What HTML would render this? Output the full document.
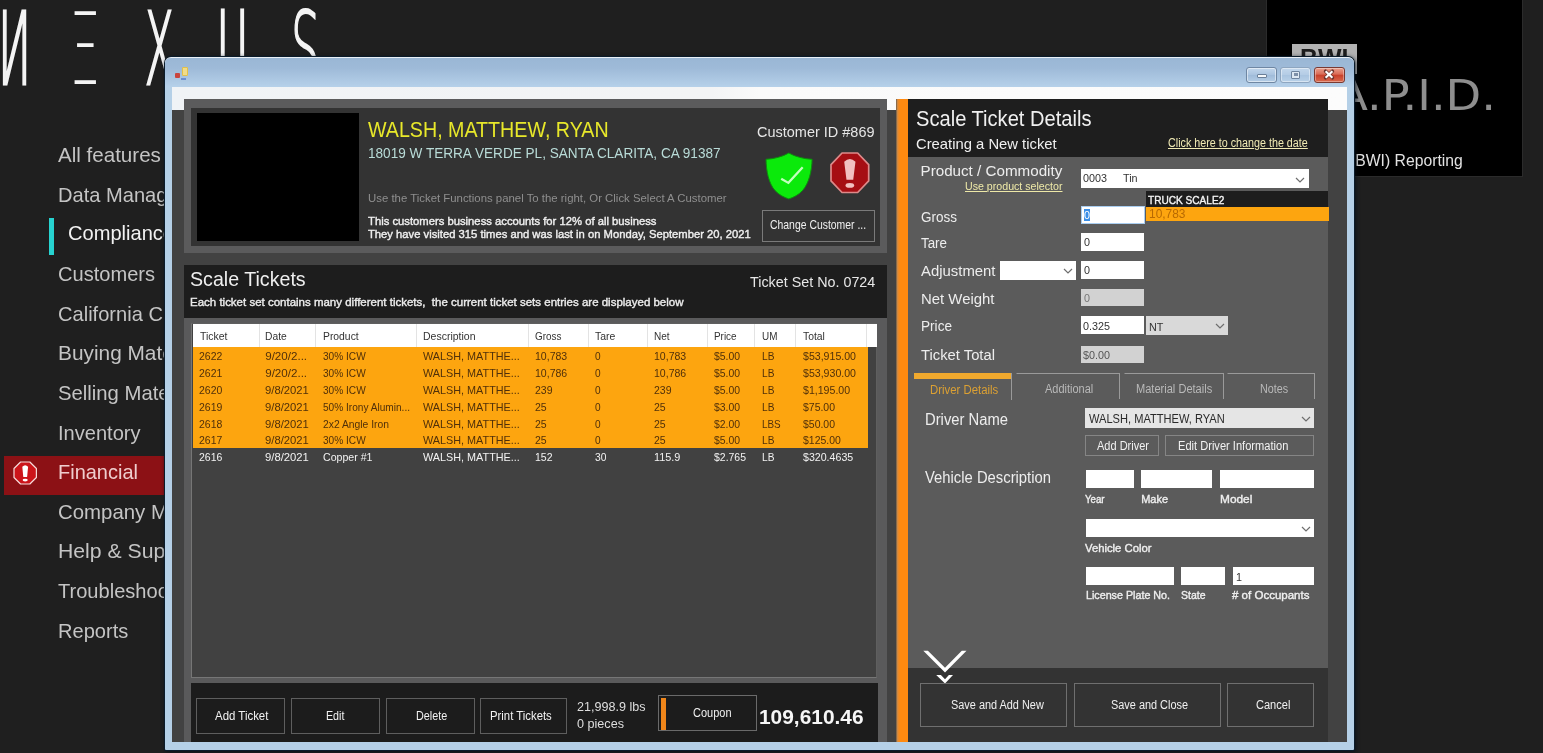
<!DOCTYPE html>
<html lang="en"><head><meta charset="utf-8"><title>Scale Ticket Details</title>
<style>
html,body{margin:0;padding:0;}
html{background:#1f1f1f;}
body{width:1543px;height:753px;overflow:hidden;position:relative;background:#1f1f1f;font-family:"Liberation Sans",sans-serif;}
#root{position:absolute;left:0;top:0;width:1543px;height:753px;overflow:hidden;background:#1f1f1f;filter:blur(0.5px);}
.b{position:absolute;box-sizing:border-box;}
.lg{position:absolute;white-space:pre;line-height:1;transform-origin:0 0;color:#f4f4f4;font-family:"DejaVu Sans Light","DejaVu Sans",sans-serif;font-weight:200;}
.t{position:absolute;white-space:pre;line-height:1;transform-origin:0 0;}
svg{position:absolute;overflow:visible;}
</style></head>
<body>
<div id="root">
<span class="lg" style="left:31.44px;top:-0.30px;font-size:46.0px;transform:scale(-0.9977,2.1500);-webkit-text-stroke:1.50px #f4f4f4;">N</span>
<span class="lg" style="left:70.47px;top:-0.30px;font-size:46.0px;transform:scale(1.0290,2.1500);-webkit-text-stroke:0.00px #f4f4f4;">Ξ</span>
<span class="lg" style="left:145.26px;top:-0.30px;font-size:46.0px;transform:scale(0.9091,2.1500);-webkit-text-stroke:1.50px #f4f4f4;">X</span>
<span class="lg" style="left:216.77px;top:-0.30px;font-size:46.0px;transform:scale(0.9193,2.1500);-webkit-text-stroke:1.90px #f4f4f4;">U</span>
<span class="lg" style="left:291.31px;top:-0.30px;font-size:46.0px;transform:scale(0.9840,2.1500);-webkit-text-stroke:1.00px #f4f4f4;">S</span>
<div class="b" style="left:4.00px;top:456.00px;width:166.00px;height:38.90px;background:#8c1115;"></div>
<div class="b" style="left:48.60px;top:217.60px;width:5.80px;height:37.20px;background:#27d3d0;"></div>
<span class="t" style="left:57.90px;top:144.96px;font-size:20.60px;color:#c4c4c4;">All features</span>
<span class="t" style="left:57.90px;top:184.61px;font-size:20.60px;color:#c4c4c4;transform:scaleX(0.9750);">Data Management</span>
<span class="t" style="left:67.70px;top:223.26px;font-size:20.60px;color:#f2f2f2;transform:scaleX(0.9750);">Compliance</span>
<span class="t" style="left:57.90px;top:263.91px;font-size:20.60px;color:#c4c4c4;transform:scaleX(0.9750);">Customers</span>
<span class="t" style="left:57.90px;top:303.56px;font-size:20.60px;color:#c4c4c4;transform:scaleX(0.9750);">California CRV</span>
<span class="t" style="left:57.90px;top:343.21px;font-size:20.60px;color:#c4c4c4;transform:scaleX(1.0120);">Buying Materials</span>
<span class="t" style="left:57.90px;top:382.86px;font-size:20.60px;color:#c4c4c4;transform:scaleX(0.9850);">Selling Materials</span>
<span class="t" style="left:57.90px;top:422.51px;font-size:20.60px;color:#c4c4c4;transform:scaleX(0.9750);">Inventory</span>
<span class="t" style="left:57.90px;top:462.16px;font-size:20.60px;color:#efcdcd;transform:scaleX(0.9700);">Financial</span>
<span class="t" style="left:57.90px;top:501.81px;font-size:20.60px;color:#c4c4c4;transform:scaleX(0.9900);">Company Management</span>
<span class="t" style="left:57.90px;top:541.46px;font-size:20.60px;color:#c4c4c4;transform:scaleX(1.0300);">Help &amp; Support</span>
<span class="t" style="left:57.90px;top:581.11px;font-size:20.60px;color:#c4c4c4;transform:scaleX(0.9750);">Troubleshooting</span>
<span class="t" style="left:57.90px;top:620.76px;font-size:20.60px;color:#c4c4c4;transform:scaleX(0.9750);">Reports</span>
<svg style="left:14.40px;top:461.60px" width="22.40" height="22.00" viewBox="0 0 22.40 22.00"><polygon points="6.56,0.00 15.84,0.00 22.40,6.45 22.40,15.55 15.84,22.00 6.56,22.00 0.00,15.55 0.00,6.45" fill="#cc141a" stroke="#f6dcdc" stroke-width="1.20" stroke-linejoin="round"/><path d="M8.29 4.84 Q11.20 1.76 14.11 4.84 L13.10 14.96 L9.30 14.96 Z" fill="#ffffff"/><ellipse cx="11.20" cy="18.04" rx="2.58" ry="1.36" fill="#ffffff"/></svg>
<div class="b" style="left:1265.70px;top:-1.00px;width:257.00px;height:178.40px;background:#000;border:1px solid #2b2b2b;"></div>
<div class="b" style="left:1292.30px;top:44.00px;width:64.40px;height:30.00px;background:#b2b2b2;"></div>
<span class="t" style="left:1299.60px;top:46.34px;font-size:25.00px;color:#1c1c1c;font-weight:700;transform:scaleX(0.9957);">BWI</span>
<span class="t" style="left:1291.00px;top:73.82px;font-size:43.00px;color:#8e8e8e;font-family:'DejaVu Sans','Liberation Sans',sans-serif;transform:scaleX(1.0768);">R.A.P.I.D.</span>
<span class="t" style="left:1349.60px;top:152.29px;font-size:16.20px;color:#e2e2e2;transform:scaleX(0.9720);">(BWI) Reporting</span>
<div class="b" style="left:164.50px;top:57.30px;width:1189.70px;height:692.70px;background:linear-gradient(#9ab7d5 0px,#9ebad8 10px,#b5d0e9 28.5px,#b5d0e7 30px);border-radius:6px 6px 1px 1px;box-shadow:0 0 0 1px #0b1c2b, 1px 1px 4px 1px rgba(4,14,24,.75);border-top:1.6px solid #eaf0f6;"></div>
<div class="b" style="left:172.40px;top:86.50px;width:1174.40px;height:655.40px;background:#424242;"></div>
<div class="b" style="left:172.40px;top:86.50px;width:1174.40px;height:23.60px;background:linear-gradient(90deg,#f0f3f6 0,#f3f4f5 46%,#fafafa 50%,#fcfcfc 100%);"></div>
<div class="b" style="left:181.80px;top:67.20px;width:6.60px;height:8.80px;background:#f0dc8a;border:1.5px solid #e3c047;border-radius:1px;"></div>
<div class="b" style="left:175.40px;top:73.00px;width:4.20px;height:4.60px;background:#c9453e;border-radius:1px;"></div>
<div class="b" style="left:181.40px;top:78.30px;width:4.80px;height:1.90px;background:#6c8fd0;"></div>
<div class="b" style="left:1245.80px;top:66.50px;width:31.50px;height:16.70px;background:linear-gradient(#c3d7ec,#a9c3df 50%,#9fbbd9 50%,#b4cde6);border:1px solid #6f87a3;border-radius:3px;box-shadow:inset 0 0 0 1px rgba(255,255,255,.5);"></div>
<div class="b" style="left:1256.50px;top:74.30px;width:10.00px;height:3.70px;background:#f4f7fa;border:1px solid #6a7f98;border-radius:1px;"></div>
<div class="b" style="left:1280.30px;top:66.50px;width:30.70px;height:16.70px;background:linear-gradient(#c3d7ec,#b4cce5 50%,#a9c4e0 50%,#b9d1e8);border:1px solid #8ea6c0;border-radius:3px;box-shadow:inset 0 0 0 1px rgba(255,255,255,.45);"></div>
<div class="b" style="left:1290.60px;top:70.60px;width:9.80px;height:8.40px;background:#dde7f1;border:1px solid #6f849e;border-radius:1px;"></div>
<div class="b" style="left:1293.60px;top:73.40px;width:4.00px;height:2.80px;background:#7e90a8;"></div>
<div class="b" style="left:1314.20px;top:66.50px;width:30.60px;height:16.70px;background:linear-gradient(#e9a08d,#d96a55 45%,#c8402a 50%,#d9694d);border:1px solid #7a3a32;border-radius:3px;box-shadow:inset 0 0 0 1px rgba(255,255,255,.35);"></div>
<svg style="left:1323.7px;top:70.4px" width="10" height="9" viewBox="0 0 10 9"><path d="M1.6 1.2 L8.4 7.8 M8.4 1.2 L1.6 7.8" stroke="#6b342d" stroke-width="3.6" stroke-linecap="round"/><path d="M1.6 1.2 L8.4 7.8 M8.4 1.2 L1.6 7.8" stroke="#fff" stroke-width="2.2" stroke-linecap="butt"/></svg>
<div class="b" style="left:184.00px;top:98.50px;width:703.00px;height:154.50px;background:#5b5b5c;"></div>
<div class="b" style="left:191.00px;top:107.50px;width:689.00px;height:138.90px;background:#333333;"></div>
<div class="b" style="left:196.50px;top:113.00px;width:162.50px;height:127.80px;background:#000;"></div>
<span class="t" style="left:368.40px;top:118.62px;font-size:21.60px;color:#e8e82a;transform:scaleX(0.9102);">WALSH, MATTHEW, RYAN</span>
<span class="t" style="left:368.40px;top:146.04px;font-size:14.60px;color:#b9dcd8;transform:scaleX(0.9308);">18019 W TERRA VERDE PL, SANTA CLARITA, CA 91387</span>
<span class="t" style="left:368.40px;top:192.61px;font-size:11.80px;color:#8f8f8f;transform:scaleX(0.9651);">Use the Ticket Functions panel To the right, Or Click Select A Customer</span>
<span class="t" style="left:368.40px;top:216.45px;font-size:11.40px;color:#f0f0f0;-webkit-text-stroke:0.39px #f0f0f0;transform:scaleX(0.9884);">This customers business accounts for 12% of all business</span>
<span class="t" style="left:368.40px;top:229.25px;font-size:11.40px;color:#f0f0f0;-webkit-text-stroke:0.39px #f0f0f0;transform:scaleX(0.9868);">They have visited 315 times and was last in on Monday, September 20, 2021</span>
<span class="t" style="left:756.70px;top:124.13px;font-size:15.20px;color:#e6e6e6;transform:scaleX(0.9533);">Customer ID #869</span>
<svg style="left:765.50px;top:153.00px" width="46.10" height="45.90" viewBox="0 0 46.1 45.9"><path d="M22.8 0 C17 3.5 8 6 0 6.3 C0.3 18 2.5 30 9 37.5 C13 41.8 18 44.5 22.8 45.9 C27.6 44.5 32.6 41.8 36.6 37.5 C43.1 30 45.8 18 46.1 6.3 C38 6 28.6 3.5 22.8 0 Z" fill="#0bea0b" stroke="#0c8f0c" stroke-width="1"/><path d="M15.2 25.7 L22.4 29.9 L36.7 14.3" fill="none" stroke="#c2ffbe" stroke-width="2.3"/></svg>
<svg style="left:831.20px;top:152.90px" width="37.70" height="39.50" viewBox="0 0 37.70 39.50"><polygon points="11.05,0.00 26.65,0.00 37.70,11.57 37.70,27.93 26.65,39.50 11.05,39.50 0.00,27.93 0.00,11.57" fill="#a60e13" stroke="#dd8a8a" stroke-width="1.70" stroke-linejoin="round"/><path d="M13.20 8.69 Q18.85 3.16 24.51 8.69 L22.24 26.86 L15.46 26.86 Z" fill="#f2c0c0"/><ellipse cx="18.85" cy="32.39" rx="4.34" ry="2.45" fill="#f2c0c0"/></svg>
<div class="b" style="left:762.30px;top:210.40px;width:112.80px;height:32.10px;border:1px solid #7a7a7a;"></div>
<span class="t" style="left:770.30px;top:218.97px;font-size:12.20px;color:#f0f0f0;transform:scaleX(0.8546);">Change Customer ...</span>
<div class="b" style="left:184.00px;top:265.40px;width:703.00px;height:476.60px;background:#5a5a5b;"></div>
<div class="b" style="left:184.00px;top:265.40px;width:703.00px;height:52.90px;background:#1d1d1d;"></div>
<span class="t" style="left:189.70px;top:270.04px;font-size:19.80px;color:#efefef;transform:scaleX(0.9927);">Scale Tickets</span>
<span class="t" style="left:189.70px;top:297.22px;font-size:11.20px;color:#ececec;-webkit-text-stroke:0.38px #ececec;transform:scaleX(1.0271);">Each ticket set contains many different tickets,  the current ticket sets entries are displayed below</span>
<span class="t" style="left:749.50px;top:274.54px;font-size:14.60px;color:#e8e8e8;transform:scaleX(0.9818);">Ticket Set No. 0724</span>
<div class="b" style="left:191.00px;top:322.50px;width:686.40px;height:355.00px;background:#414141;border:1px solid #767676;border-right-color:#5f5f5f;border-top-color:#5f5f5f;"></div>
<div class="b" style="left:193.00px;top:323.50px;width:683.50px;height:23.50px;background:#ffffff;"></div>
<span class="t" style="left:199.80px;top:329.78px;font-size:11.60px;color:#333;transform:scaleX(0.9016);">Ticket</span>
<div class="b" style="left:258.50px;top:324.00px;width:1.00px;height:22.50px;background:#e3e3e3;"></div>
<span class="t" style="left:265.20px;top:329.78px;font-size:11.60px;color:#333;transform:scaleX(0.8857);">Date</span>
<div class="b" style="left:314.50px;top:324.00px;width:1.00px;height:22.50px;background:#e3e3e3;"></div>
<span class="t" style="left:322.80px;top:329.78px;font-size:11.60px;color:#333;transform:scaleX(0.8932);">Product</span>
<div class="b" style="left:415.50px;top:324.00px;width:1.00px;height:22.50px;background:#e3e3e3;"></div>
<span class="t" style="left:422.70px;top:329.78px;font-size:11.60px;color:#333;transform:scaleX(0.9052);">Description</span>
<div class="b" style="left:527.50px;top:324.00px;width:1.00px;height:22.50px;background:#e3e3e3;"></div>
<span class="t" style="left:534.70px;top:329.78px;font-size:11.60px;color:#333;transform:scaleX(0.8538);">Gross</span>
<div class="b" style="left:587.50px;top:324.00px;width:1.00px;height:22.50px;background:#e3e3e3;"></div>
<span class="t" style="left:595.30px;top:329.78px;font-size:11.60px;color:#333;transform:scaleX(0.8997);">Tare</span>
<div class="b" style="left:646.50px;top:324.00px;width:1.00px;height:22.50px;background:#e3e3e3;"></div>
<span class="t" style="left:654.40px;top:329.78px;font-size:11.60px;color:#333;transform:scaleX(0.8644);">Net</span>
<div class="b" style="left:706.50px;top:324.00px;width:1.00px;height:22.50px;background:#e3e3e3;"></div>
<span class="t" style="left:713.90px;top:329.78px;font-size:11.60px;color:#333;transform:scaleX(0.8554);">Price</span>
<div class="b" style="left:754.00px;top:324.00px;width:1.00px;height:22.50px;background:#e3e3e3;"></div>
<span class="t" style="left:761.50px;top:329.78px;font-size:11.60px;color:#333;transform:scaleX(0.8541);">UM</span>
<div class="b" style="left:794.50px;top:324.00px;width:1.00px;height:22.50px;background:#e3e3e3;"></div>
<span class="t" style="left:802.50px;top:329.78px;font-size:11.60px;color:#333;transform:scaleX(0.8939);">Total</span>
<div class="b" style="left:866.00px;top:324.00px;width:1.00px;height:22.50px;background:#e3e3e3;"></div>
<div class="b" style="left:193.00px;top:347.00px;width:675.30px;height:101.20px;background:#fda50f;"></div>
<span class="t" style="left:198.70px;top:350.08px;font-size:11.60px;color:#50300a;transform:scaleX(0.9032);">2622</span>
<span class="t" style="left:265.20px;top:350.08px;font-size:11.60px;color:#50300a;">9/20/2...</span>
<span class="t" style="left:322.80px;top:350.08px;font-size:11.60px;color:#50300a;transform:scaleX(0.8720);">30% ICW</span>
<span class="t" style="left:422.70px;top:350.08px;font-size:11.60px;color:#50300a;transform:scaleX(0.9333);">WALSH, MATTHE...</span>
<span class="t" style="left:534.70px;top:350.08px;font-size:11.60px;color:#50300a;transform:scaleX(0.9078);">10,783</span>
<span class="t" style="left:595.30px;top:350.08px;font-size:11.60px;color:#50300a;transform:scaleX(0.8678);">0</span>
<span class="t" style="left:654.40px;top:350.08px;font-size:11.60px;color:#50300a;transform:scaleX(0.9078);">10,783</span>
<span class="t" style="left:713.90px;top:350.08px;font-size:11.60px;color:#50300a;transform:scaleX(0.8995);">$5.00</span>
<span class="t" style="left:761.50px;top:350.08px;font-size:11.60px;color:#50300a;transform:scaleX(0.8740);">LB</span>
<span class="t" style="left:802.50px;top:350.08px;font-size:11.60px;color:#50300a;transform:scaleX(0.9133);">$53,915.00</span>
<span class="t" style="left:198.70px;top:366.95px;font-size:11.60px;color:#50300a;transform:scaleX(0.9032);">2621</span>
<span class="t" style="left:265.20px;top:366.95px;font-size:11.60px;color:#50300a;">9/20/2...</span>
<span class="t" style="left:322.80px;top:366.95px;font-size:11.60px;color:#50300a;transform:scaleX(0.8720);">30% ICW</span>
<span class="t" style="left:422.70px;top:366.95px;font-size:11.60px;color:#50300a;transform:scaleX(0.9333);">WALSH, MATTHE...</span>
<span class="t" style="left:534.70px;top:366.95px;font-size:11.60px;color:#50300a;transform:scaleX(0.9078);">10,786</span>
<span class="t" style="left:595.30px;top:366.95px;font-size:11.60px;color:#50300a;transform:scaleX(0.8678);">0</span>
<span class="t" style="left:654.40px;top:366.95px;font-size:11.60px;color:#50300a;transform:scaleX(0.9078);">10,786</span>
<span class="t" style="left:713.90px;top:366.95px;font-size:11.60px;color:#50300a;transform:scaleX(0.8995);">$5.00</span>
<span class="t" style="left:761.50px;top:366.95px;font-size:11.60px;color:#50300a;transform:scaleX(0.8740);">LB</span>
<span class="t" style="left:802.50px;top:366.95px;font-size:11.60px;color:#50300a;transform:scaleX(0.9133);">$53,930.00</span>
<span class="t" style="left:198.70px;top:383.82px;font-size:11.60px;color:#50300a;transform:scaleX(0.9032);">2620</span>
<span class="t" style="left:265.20px;top:383.82px;font-size:11.60px;color:#50300a;transform:scaleX(0.9725);">9/8/2021</span>
<span class="t" style="left:322.80px;top:383.82px;font-size:11.60px;color:#50300a;transform:scaleX(0.8720);">30% ICW</span>
<span class="t" style="left:422.70px;top:383.82px;font-size:11.60px;color:#50300a;transform:scaleX(0.9333);">WALSH, MATTHE...</span>
<span class="t" style="left:534.70px;top:383.82px;font-size:11.60px;color:#50300a;transform:scaleX(0.9047);">239</span>
<span class="t" style="left:595.30px;top:383.82px;font-size:11.60px;color:#50300a;transform:scaleX(0.8678);">0</span>
<span class="t" style="left:654.40px;top:383.82px;font-size:11.60px;color:#50300a;transform:scaleX(0.9047);">239</span>
<span class="t" style="left:713.90px;top:383.82px;font-size:11.60px;color:#50300a;transform:scaleX(0.8995);">$5.00</span>
<span class="t" style="left:761.50px;top:383.82px;font-size:11.60px;color:#50300a;transform:scaleX(0.8740);">LB</span>
<span class="t" style="left:802.50px;top:383.82px;font-size:11.60px;color:#50300a;transform:scaleX(0.9132);">$1,195.00</span>
<span class="t" style="left:198.70px;top:400.69px;font-size:11.60px;color:#50300a;transform:scaleX(0.9032);">2619</span>
<span class="t" style="left:265.20px;top:400.69px;font-size:11.60px;color:#50300a;transform:scaleX(0.9725);">9/8/2021</span>
<span class="t" style="left:322.80px;top:400.69px;font-size:11.60px;color:#50300a;transform:scaleX(0.8710);">50% Irony Alumin...</span>
<span class="t" style="left:422.70px;top:400.69px;font-size:11.60px;color:#50300a;transform:scaleX(0.9333);">WALSH, MATTHE...</span>
<span class="t" style="left:534.70px;top:400.69px;font-size:11.60px;color:#50300a;transform:scaleX(0.9065);">25</span>
<span class="t" style="left:595.30px;top:400.69px;font-size:11.60px;color:#50300a;transform:scaleX(0.8678);">0</span>
<span class="t" style="left:654.40px;top:400.69px;font-size:11.60px;color:#50300a;transform:scaleX(0.9065);">25</span>
<span class="t" style="left:713.90px;top:400.69px;font-size:11.60px;color:#50300a;transform:scaleX(0.8995);">$3.00</span>
<span class="t" style="left:761.50px;top:400.69px;font-size:11.60px;color:#50300a;transform:scaleX(0.8740);">LB</span>
<span class="t" style="left:802.50px;top:400.69px;font-size:11.60px;color:#50300a;transform:scaleX(0.9022);">$75.00</span>
<span class="t" style="left:198.70px;top:417.56px;font-size:11.60px;color:#50300a;transform:scaleX(0.9032);">2618</span>
<span class="t" style="left:265.20px;top:417.56px;font-size:11.60px;color:#50300a;transform:scaleX(0.9725);">9/8/2021</span>
<span class="t" style="left:322.80px;top:417.56px;font-size:11.60px;color:#50300a;transform:scaleX(0.8904);">2x2 Angle Iron</span>
<span class="t" style="left:422.70px;top:417.56px;font-size:11.60px;color:#50300a;transform:scaleX(0.9333);">WALSH, MATTHE...</span>
<span class="t" style="left:534.70px;top:417.56px;font-size:11.60px;color:#50300a;transform:scaleX(0.9065);">25</span>
<span class="t" style="left:595.30px;top:417.56px;font-size:11.60px;color:#50300a;transform:scaleX(0.8678);">0</span>
<span class="t" style="left:654.40px;top:417.56px;font-size:11.60px;color:#50300a;transform:scaleX(0.9065);">25</span>
<span class="t" style="left:713.90px;top:417.56px;font-size:11.60px;color:#50300a;transform:scaleX(0.8995);">$2.00</span>
<span class="t" style="left:761.50px;top:417.56px;font-size:11.60px;color:#50300a;transform:scaleX(0.8530);">LBS</span>
<span class="t" style="left:802.50px;top:417.56px;font-size:11.60px;color:#50300a;transform:scaleX(0.9022);">$50.00</span>
<span class="t" style="left:198.70px;top:434.43px;font-size:11.60px;color:#50300a;transform:scaleX(0.9032);">2617</span>
<span class="t" style="left:265.20px;top:434.43px;font-size:11.60px;color:#50300a;transform:scaleX(0.9725);">9/8/2021</span>
<span class="t" style="left:322.80px;top:434.43px;font-size:11.60px;color:#50300a;transform:scaleX(0.8720);">30% ICW</span>
<span class="t" style="left:422.70px;top:434.43px;font-size:11.60px;color:#50300a;transform:scaleX(0.9333);">WALSH, MATTHE...</span>
<span class="t" style="left:534.70px;top:434.43px;font-size:11.60px;color:#50300a;transform:scaleX(0.9065);">25</span>
<span class="t" style="left:595.30px;top:434.43px;font-size:11.60px;color:#50300a;transform:scaleX(0.8678);">0</span>
<span class="t" style="left:654.40px;top:434.43px;font-size:11.60px;color:#50300a;transform:scaleX(0.9065);">25</span>
<span class="t" style="left:713.90px;top:434.43px;font-size:11.60px;color:#50300a;transform:scaleX(0.8995);">$5.00</span>
<span class="t" style="left:761.50px;top:434.43px;font-size:11.60px;color:#50300a;transform:scaleX(0.8740);">LB</span>
<span class="t" style="left:802.50px;top:434.43px;font-size:11.60px;color:#50300a;transform:scaleX(0.9017);">$125.00</span>
<span class="t" style="left:198.70px;top:451.30px;font-size:11.60px;color:#f2f2f2;transform:scaleX(0.9032);">2616</span>
<span class="t" style="left:265.20px;top:451.30px;font-size:11.60px;color:#f2f2f2;transform:scaleX(0.9725);">9/8/2021</span>
<span class="t" style="left:322.80px;top:451.30px;font-size:11.60px;color:#f2f2f2;transform:scaleX(0.9140);">Copper #1</span>
<span class="t" style="left:422.70px;top:451.30px;font-size:11.60px;color:#f2f2f2;transform:scaleX(0.9333);">WALSH, MATTHE...</span>
<span class="t" style="left:534.70px;top:451.30px;font-size:11.60px;color:#f2f2f2;transform:scaleX(0.9047);">152</span>
<span class="t" style="left:595.30px;top:451.30px;font-size:11.60px;color:#f2f2f2;transform:scaleX(0.8833);">30</span>
<span class="t" style="left:654.40px;top:451.30px;font-size:11.60px;color:#f2f2f2;transform:scaleX(0.9376);">115.9</span>
<span class="t" style="left:713.90px;top:451.30px;font-size:11.60px;color:#f2f2f2;transform:scaleX(0.9022);">$2.765</span>
<span class="t" style="left:761.50px;top:451.30px;font-size:11.60px;color:#f2f2f2;transform:scaleX(0.8740);">LB</span>
<span class="t" style="left:802.50px;top:451.30px;font-size:11.60px;color:#f2f2f2;transform:scaleX(0.9158);">$320.4635</span>
<div class="b" style="left:191.00px;top:682.70px;width:686.60px;height:59.30px;background:#1c1c1c;"></div>
<div class="b" style="left:196.30px;top:698.20px;width:88.80px;height:36.30px;border:1px solid #5e5e5e;"></div>
<span class="t" style="left:215.20px;top:710.04px;font-size:12.00px;color:#f2f2f2;transform:scaleX(0.9530);">Add Ticket</span>
<div class="b" style="left:290.50px;top:698.20px;width:89.20px;height:36.30px;border:1px solid #5e5e5e;"></div>
<span class="t" style="left:326.10px;top:710.04px;font-size:12.00px;color:#f2f2f2;transform:scaleX(0.8894);">Edit</span>
<div class="b" style="left:385.70px;top:698.20px;width:89.30px;height:36.30px;border:1px solid #5e5e5e;"></div>
<span class="t" style="left:416.20px;top:710.04px;font-size:12.00px;color:#f2f2f2;transform:scaleX(0.8995);">Delete</span>
<div class="b" style="left:479.90px;top:698.20px;width:87.50px;height:36.30px;border:1px solid #5e5e5e;"></div>
<span class="t" style="left:489.60px;top:710.04px;font-size:12.00px;color:#f2f2f2;transform:scaleX(0.9455);">Print Tickets</span>
<span class="t" style="left:577.00px;top:701.46px;font-size:12.80px;color:#dedede;transform:scaleX(0.9823);">21,998.9 lbs</span>
<span class="t" style="left:577.00px;top:718.06px;font-size:12.80px;color:#dedede;transform:scaleX(0.9859);">0 pieces</span>
<div class="b" style="left:658.40px;top:694.80px;width:98.80px;height:36.00px;border:1px solid #6a6a6a;"></div>
<div class="b" style="left:661.30px;top:698.00px;width:5.20px;height:32.40px;background:#f0861a;"></div>
<span class="t" style="left:692.70px;top:706.87px;font-size:12.20px;color:#f0f0f0;transform:scaleX(0.9016);">Coupon</span>
<span class="t" style="left:759.00px;top:706.90px;font-size:20.20px;color:#f6f6f6;font-weight:700;transform:scaleX(1.0352);">109,610.46</span>
<div class="b" style="left:895.60px;top:98.50px;width:432.70px;height:643.50px;background:#5b5b5b;"></div>
<div class="b" style="left:895.60px;top:98.50px;width:12.60px;height:643.50px;background:linear-gradient(90deg,#5e5448 0,#c98a4a 1.2px,#ea8a2a 2.4px,#ff8a10 4.2px);"></div>
<div class="b" style="left:908.00px;top:98.50px;width:420.30px;height:58.30px;background:#1e1e1e;"></div>
<div class="b" style="left:908.00px;top:667.60px;width:420.30px;height:74.40px;background:#333333;"></div>
<span class="t" style="left:915.50px;top:107.55px;font-size:21.20px;color:#f0f0f0;transform:scaleX(0.9493);">Scale Ticket Details</span>
<span class="t" style="left:916.00px;top:136.87px;font-size:14.80px;color:#f0f0f0;">Creating a New ticket</span>
<span class="t" style="left:1167.60px;top:136.64px;font-size:12.00px;color:#f1ebb4;transform:scaleX(0.8955);text-decoration:underline;">Click here to change the date</span>
<span class="t" style="left:920.50px;top:163.13px;font-size:15.20px;color:#ededed;">Product / Commodity</span>
<span class="t" style="left:964.50px;top:180.95px;font-size:11.40px;color:#eee9a8;transform:scaleX(0.9333);text-decoration:underline;">Use product selector</span>
<span class="t" style="left:920.50px;top:209.13px;font-size:15.20px;color:#ededed;transform:scaleX(0.8885);">Gross</span>
<span class="t" style="left:920.50px;top:235.13px;font-size:15.20px;color:#ededed;transform:scaleX(0.8800);">Tare</span>
<span class="t" style="left:920.50px;top:263.13px;font-size:15.20px;color:#ededed;transform:scaleX(0.9805);">Adjustment</span>
<span class="t" style="left:920.50px;top:291.13px;font-size:15.20px;color:#ededed;transform:scaleX(0.9818);">Net Weight</span>
<span class="t" style="left:920.50px;top:318.23px;font-size:15.20px;color:#ededed;transform:scaleX(0.8957);">Price</span>
<span class="t" style="left:920.50px;top:347.13px;font-size:15.20px;color:#ededed;transform:scaleX(0.9741);">Ticket Total</span>
<div class="b" style="left:1080.50px;top:169.10px;width:228.10px;height:19.10px;background:#fff;"></div>
<span class="t" style="left:1082.90px;top:172.18px;font-size:11.60px;color:#333;transform:scaleX(0.9300);">0003</span>
<span class="t" style="left:1122.70px;top:172.18px;font-size:11.60px;color:#333;transform:scaleX(0.9300);">Tin</span>
<svg style="left:1295.00px;top:176.50px" width="10" height="6" viewBox="0 0 10 6"><path d="M1 1 L5 5 L9 1" fill="none" stroke="#6e6e6e" stroke-width="1.2"/></svg>
<div class="b" style="left:1146.00px;top:191.20px;width:182.30px;height:15.80px;background:#1d1d1d;"></div>
<span class="t" style="left:1148.00px;top:194.38px;font-size:11.60px;color:#f4f4f4;-webkit-text-stroke:0.39px #f4f4f4;transform:scaleX(0.8708);">TRUCK SCALE2</span>
<div class="b" style="left:1146.00px;top:207.00px;width:183.00px;height:14.00px;background:#fda50f;"></div>
<span class="t" style="left:1148.60px;top:208.23px;font-size:12.60px;color:#b86a02;transform:scaleX(0.9473);">10,783</span>
<div class="b" style="left:1080.50px;top:205.60px;width:64.50px;height:18.90px;background:#fff;border:1.5px solid #a9cdf0;"></div>
<div class="b" style="left:1083.50px;top:209.20px;width:6.40px;height:11.90px;background:#3a8fe8;"></div>
<span class="t" style="left:1083.80px;top:209.48px;font-size:11.60px;color:#fff;transform:scaleX(0.9300);">0</span>
<div class="b" style="left:1080.60px;top:232.80px;width:63.90px;height:17.90px;background:#fff;"></div>
<span class="t" style="left:1083.80px;top:236.28px;font-size:11.60px;color:#333;transform:scaleX(0.9300);">0</span>
<div class="b" style="left:999.90px;top:261.10px;width:76.00px;height:18.90px;background:#fff;"></div>
<svg style="left:1062.50px;top:267.50px" width="10" height="6" viewBox="0 0 10 6"><path d="M1 1 L5 5 L9 1" fill="none" stroke="#6e6e6e" stroke-width="1.2"/></svg>
<div class="b" style="left:1080.60px;top:260.70px;width:63.90px;height:18.10px;background:#fff;"></div>
<span class="t" style="left:1083.80px;top:264.18px;font-size:11.60px;color:#333;transform:scaleX(0.9300);">0</span>
<div class="b" style="left:1080.60px;top:288.60px;width:63.90px;height:17.80px;background:#d2d2d2;"></div>
<span class="t" style="left:1083.80px;top:291.88px;font-size:11.60px;color:#777;transform:scaleX(0.9300);">0</span>
<div class="b" style="left:1080.60px;top:316.40px;width:63.90px;height:17.90px;background:#fff;"></div>
<span class="t" style="left:1083.00px;top:319.78px;font-size:11.60px;color:#333;transform:scaleX(0.9300);">0.325</span>
<div class="b" style="left:1145.90px;top:315.70px;width:82.50px;height:19.80px;background:#d9d9d9;"></div>
<span class="t" style="left:1149.40px;top:320.58px;font-size:11.60px;color:#333;transform:scaleX(0.9300);">NT</span>
<svg style="left:1214.50px;top:322.50px" width="10" height="6" viewBox="0 0 10 6"><path d="M1 1 L5 5 L9 1" fill="none" stroke="#6e6e6e" stroke-width="1.2"/></svg>
<div class="b" style="left:1080.60px;top:345.50px;width:63.90px;height:17.90px;background:#d2d2d2;"></div>
<span class="t" style="left:1083.00px;top:348.78px;font-size:11.60px;color:#555;transform:scaleX(0.9300);">$0.00</span>
<div class="b" style="left:913.90px;top:372.60px;width:97.90px;height:6.30px;background:#f0a92e;"></div>
<div class="b" style="left:1011.00px;top:373.00px;width:1.20px;height:27.00px;background:#9a9a9a;"></div>
<div class="b" style="left:1016.10px;top:372.80px;width:103.70px;height:26.70px;border:1px solid #9a9a9a;border-bottom:none;border-left-color:transparent;"></div>
<div class="b" style="left:1123.80px;top:372.80px;width:100.00px;height:26.70px;border:1px solid #9a9a9a;border-bottom:none;border-left-color:transparent;"></div>
<div class="b" style="left:1227.40px;top:372.80px;width:87.30px;height:26.70px;border:1px solid #9a9a9a;border-bottom:none;border-left-color:transparent;"></div>
<span class="t" style="left:930.00px;top:383.74px;font-size:12.00px;color:#dba033;transform:scaleX(0.9470);">Driver Details</span>
<span class="t" style="left:1045.40px;top:383.44px;font-size:12.00px;color:#b9b9b9;transform:scaleX(0.9143);">Additional</span>
<span class="t" style="left:1136.30px;top:383.24px;font-size:12.00px;color:#b9b9b9;transform:scaleX(0.9214);">Material Details</span>
<span class="t" style="left:1259.70px;top:383.24px;font-size:12.00px;color:#b9b9b9;transform:scaleX(0.8961);">Notes</span>
<span class="t" style="left:925.10px;top:412.23px;font-size:15.80px;color:#ededed;transform:scaleX(0.9362);">Driver Name</span>
<div class="b" style="left:1084.90px;top:408.00px;width:228.90px;height:20.10px;background:#e5e5e5;"></div>
<span class="t" style="left:1088.80px;top:412.54px;font-size:12.00px;color:#2a2a2a;transform:scaleX(0.9237);">WALSH, MATTHEW, RYAN</span>
<svg style="left:1300.50px;top:415.50px" width="10" height="6" viewBox="0 0 10 6"><path d="M1 1 L5 5 L9 1" fill="none" stroke="#6e6e6e" stroke-width="1.2"/></svg>
<div class="b" style="left:1085.20px;top:435.30px;width:73.50px;height:21.10px;border:1px solid #858585;"></div>
<span class="t" style="left:1096.90px;top:440.04px;font-size:12.00px;color:#f2f2f2;transform:scaleX(0.9173);">Add Driver</span>
<div class="b" style="left:1165.00px;top:435.30px;width:149.20px;height:21.10px;border:1px solid #858585;"></div>
<span class="t" style="left:1178.10px;top:440.04px;font-size:12.00px;color:#f2f2f2;transform:scaleX(0.9240);">Edit Driver Information</span>
<span class="t" style="left:925.10px;top:469.93px;font-size:15.80px;color:#ededed;transform:scaleX(0.9379);">Vehicle Description</span>
<div class="b" style="left:1085.80px;top:470.20px;width:48.20px;height:18.00px;background:#fff;"></div>
<div class="b" style="left:1141.20px;top:470.20px;width:71.30px;height:18.00px;background:#fff;"></div>
<div class="b" style="left:1219.70px;top:470.20px;width:94.10px;height:18.00px;background:#fff;"></div>
<span class="t" style="left:1085.00px;top:493.69px;font-size:11.00px;color:#efefef;-webkit-text-stroke:0.37px #efefef;transform:scaleX(0.8815);">Year</span>
<span class="t" style="left:1141.20px;top:493.69px;font-size:11.00px;color:#efefef;-webkit-text-stroke:0.37px #efefef;">Make</span>
<span class="t" style="left:1219.70px;top:493.69px;font-size:11.00px;color:#efefef;-webkit-text-stroke:0.37px #efefef;transform:scaleX(1.0778);">Model</span>
<div class="b" style="left:1085.80px;top:518.50px;width:228.00px;height:18.90px;background:#fff;"></div>
<svg style="left:1300.50px;top:525.50px" width="10" height="6" viewBox="0 0 10 6"><path d="M1 1 L5 5 L9 1" fill="none" stroke="#6e6e6e" stroke-width="1.2"/></svg>
<span class="t" style="left:1085.40px;top:542.89px;font-size:11.00px;color:#efefef;-webkit-text-stroke:0.37px #efefef;transform:scaleX(1.0258);">Vehicle Color</span>
<div class="b" style="left:1085.80px;top:567.30px;width:87.80px;height:17.90px;background:#fff;"></div>
<div class="b" style="left:1181.20px;top:567.30px;width:43.90px;height:17.90px;background:#fff;"></div>
<div class="b" style="left:1232.60px;top:567.30px;width:81.20px;height:17.90px;background:#fff;"></div>
<span class="t" style="left:1236.20px;top:570.58px;font-size:11.60px;color:#333;transform:scaleX(0.9300);">1</span>
<span class="t" style="left:1085.80px;top:590.49px;font-size:11.00px;color:#efefef;-webkit-text-stroke:0.37px #efefef;transform:scaleX(0.9743);">License Plate No.</span>
<span class="t" style="left:1181.20px;top:590.49px;font-size:11.00px;color:#efefef;-webkit-text-stroke:0.37px #efefef;transform:scaleX(0.9538);">State</span>
<span class="t" style="left:1232.20px;top:590.49px;font-size:11.00px;color:#efefef;-webkit-text-stroke:0.37px #efefef;transform:scaleX(1.0473);"># of Occupants</span>
<svg style="left:920px;top:648px" width="50" height="40" viewBox="920 648 50 40"><polygon points="923.3,650.8 927.9,650.8 945,667.8 961.8,650.8 966.5,650.8 945,672.4" fill="#fff"/><polygon points="936.2,675 940.9,675 945,679.2 948.9,675 953,675 945,683.6" fill="#fff"/></svg>
<div class="b" style="left:920.10px;top:683.40px;width:146.50px;height:43.40px;border:1px solid #6f6f6f;"></div>
<span class="t" style="left:950.70px;top:699.44px;font-size:12.00px;color:#f0f0f0;transform:scaleX(0.9091);">Save and Add New</span>
<div class="b" style="left:1074.20px;top:683.40px;width:146.90px;height:43.40px;border:1px solid #6f6f6f;"></div>
<span class="t" style="left:1110.80px;top:699.44px;font-size:12.00px;color:#f0f0f0;transform:scaleX(0.9087);">Save and Close</span>
<div class="b" style="left:1226.60px;top:683.40px;width:87.80px;height:43.40px;border:1px solid #6f6f6f;"></div>
<span class="t" style="left:1255.50px;top:699.44px;font-size:12.00px;color:#f0f0f0;transform:scaleX(0.9208);">Cancel</span>
</div>
</body></html>
